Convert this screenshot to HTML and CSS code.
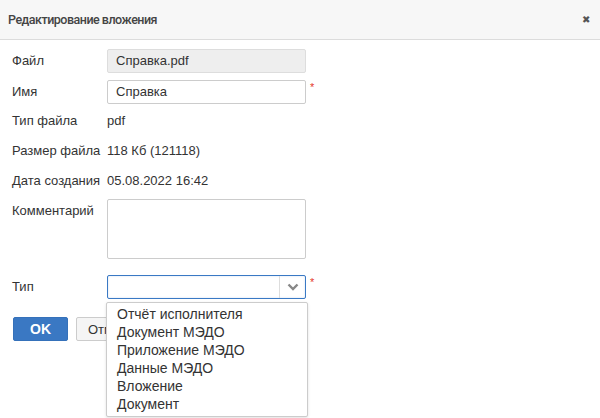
FILE: index.html
```html
<!DOCTYPE html>
<html lang="ru">
<head>
<meta charset="utf-8">
<link rel="stylesheet" href="styles.css">
</head>
<body>
<div class="dialog">
  <div class="header">
    <span class="title">Редактирование вложения</span>
    <span class="close">&#x2716;</span>
  </div>
  <div class="body">
    <div class="row r-file">
      <div class="label">Файл</div>
      <div class="input disabled">Справка.pdf</div>
    </div>
    <div class="row r-name">
      <div class="label">Имя</div>
      <div class="input">Справка</div>
      <span class="req">*</span>
    </div>
    <div class="row r-text">
      <div class="label">Тип файла</div>
      <div class="value">pdf</div>
    </div>
    <div class="row r-text">
      <div class="label">Размер файла</div>
      <div class="value">118 Кб (121118)</div>
    </div>
    <div class="row r-text">
      <div class="label">Дата создания</div>
      <div class="value">05.08.2022 16:42</div>
    </div>
    <div class="row r-comment">
      <div class="label">Комментарий</div>
      <div class="textarea"></div>
    </div>
    <div class="row r-type">
      <div class="label">Тип</div>
      <div class="select-wrap">
        <div class="select">
          <div class="select-text"></div>
          <div class="select-btn">
            <svg width="12" height="8" viewBox="0 0 12 8"><path d="M1.5 1.5 L6 6 L10.5 1.5" fill="none" stroke="#888" stroke-width="2.4"/></svg>
          </div>
        </div>
        <ul class="dropdown">
          <li>Отчёт исполнителя</li>
          <li>Документ МЭДО</li>
          <li>Приложение МЭДО</li>
          <li>Данные МЭДО</li>
          <li>Вложение</li>
          <li>Документ</li>
        </ul>
      </div>
      <span class="req">*</span>
    </div>
    <div class="buttons">
      <button class="btn ok">OK</button>
      <button class="btn cancel">Отмена</button>
    </div>
  </div>
</div>
</body>
</html>
```
FILE: styles.css
```css
html, body {
  margin: 0;
  padding: 0;
  background: #fff;
  min-height: 418px;
}
body {
  font-family: "Liberation Sans", Arial, sans-serif;
  font-size: 13px;
  color: #333;
}
.dialog {
  width: 600px;
  height: 354px;
  background: #fff;
  position: relative;
}
.header {
  height: 40px;
  box-sizing: border-box;
  background: #f7f7f7;
  border-bottom: 1px solid #dcdcdc;
  display: flex;
  align-items: center;
  justify-content: space-between;
  padding: 0 10px 0 8px;
}
.title {
  font-family: Roboto, "Liberation Sans", sans-serif;
  font-size: 12.5px;
  letter-spacing: -0.5px;
  font-weight: 500;
  color: #444;
}
.close {
  font-size: 10px;
  color: #555;
  margin-top: -1px;
}
.body {
  padding: 9px 0 0 12px;
}
.row {
  display: flex;
  align-items: flex-start;
}
.label {
  width: 95px;
  flex: none;
  line-height: 24px;
}
.r-file { height: 31px; }
.r-name { height: 29px; }
.r-text { height: 30px; }
.r-text .label, .r-text .value { line-height: 24px; }
.input {
  width: 199px;
  height: 24px;
  box-sizing: border-box;
  border: 1px solid #ccc;
  border-radius: 2px;
  padding: 0 8px;
  line-height: 22px;
  background: #fff;
}
.input.disabled {
  background: #eee;
  border-color: #ddd;
}
.req {
  color: #e4382c;
  font-size: 11px;
  margin-left: 4px;
  line-height: 14px;
}
.r-comment { height: 76px; }
.r-comment .label { line-height: 24px; }
.textarea {
  width: 199px;
  height: 60px;
  box-sizing: border-box;
  border: 1px solid #ccc;
  border-radius: 2px;
}
.r-type { height: 42px; }
.select-wrap {
  position: relative;
  width: 199px;
}
.select {
  display: flex;
  height: 24px;
  box-sizing: border-box;
  border: 1px solid #3a79c4;
  border-radius: 2px;
  box-shadow: inset 0 0 2px rgba(58,121,196,0.25);
}
.select-text { flex: 1; }
.select-btn {
  width: 25px;
  border-left: 1px solid #ddd;
  display: flex;
  align-items: center;
  justify-content: center;
}
.dropdown {
  position: absolute;
  left: -1px;
  top: 27px;
  width: 202px;
  box-sizing: border-box;
  margin: 0;
  padding: 2px 0 3px 0;
  list-style: none;
  background: #fff;
  border: 1px solid #ccc;
  border-radius: 2px;
  box-shadow: 0 1px 3px rgba(0,0,0,0.12);
  z-index: 2;
}
.dropdown li {
  padding-left: 10px;
  line-height: 18px;
  font-size: 14px;
  color: #333;
}
.buttons {
  display: flex;
  gap: 8px;
  padding-left: 1px;
}
.btn {
  height: 24px;
  border-radius: 2px;
  font-family: inherit;
  font-size: 13px;
  padding: 0;
  cursor: pointer;
}
.ok {
  width: 55px;
  background: #3a78c3;
  border: 1px solid #3571ba;
  color: #fff;
  font-weight: bold;
  font-size: 14px;
}
.cancel {
  width: 70px;
  background: #f5f5f5;
  border: 1px solid #ccc;
  color: #333;
  text-align: left;
  padding-left: 11px;
}
```
